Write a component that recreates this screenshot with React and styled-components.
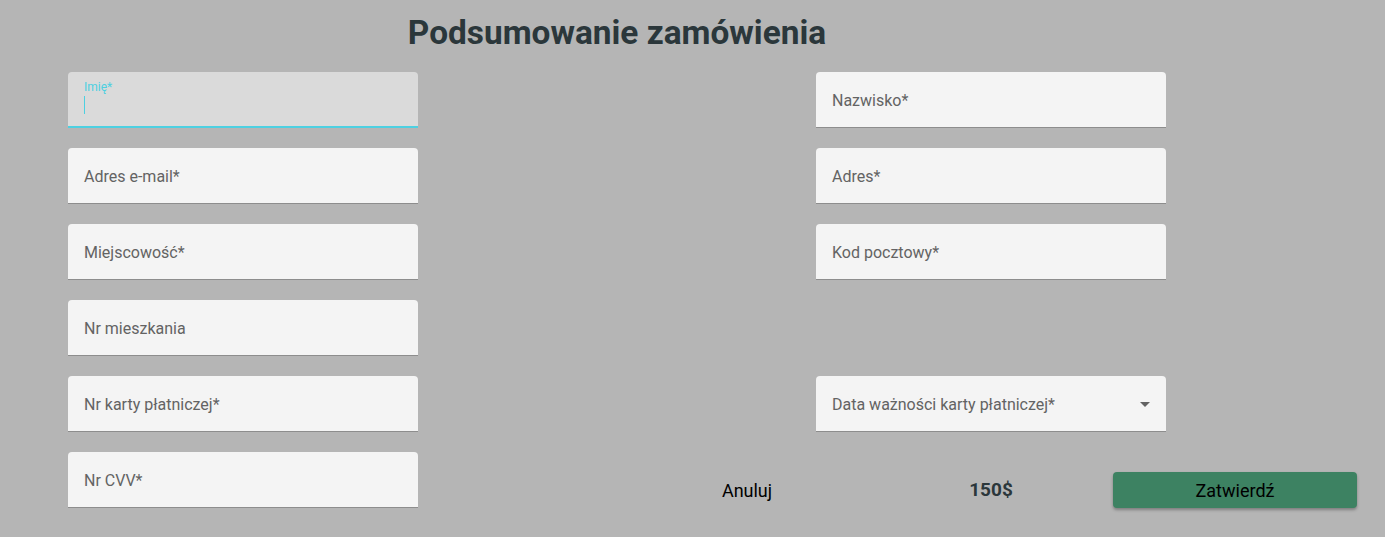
import React from "react";
import styled, { createGlobalStyle } from "styled-components";

const GlobalStyle = createGlobalStyle`
  body {
    margin: 0;
    background: #b5b5b5;
    font-family: Roboto, "Liberation Sans", sans-serif;
  }
`;

const Page = styled.div`
  min-height: 537px;
  padding-top: 12px;
  box-sizing: border-box;
`;

const Title = styled.h1`
  width: 1234px;
  margin: 0 0 19px;
  text-align: center;
  font-size: 33.4px;
  line-height: 41px;
  font-weight: 700;
  color: #2b373b;
`;

const Form = styled.div`
  display: flex;
  flex-direction: column;
  gap: 20px;
  padding-left: 68px;
`;

const Row = styled.div`
  display: flex;
  align-items: stretch;
  height: 56px;
`;

const Field = styled.div`
  position: relative;
  flex: 0 0 350px;
  height: 56px;
  box-sizing: border-box;
  margin-left: ${(p) => (p.$right ? "398px" : "0")};
  background: ${(p) => (p.$focused ? "#dadada" : "#f4f4f4")};
  border-radius: 4px 4px 0 0;
  border-bottom: ${(p) => (p.$focused ? "2px solid #4dd0e1" : "1px solid #8d8d8d")};
  display: flex;
  align-items: center;
  padding: 1px 16px 0;
`;

const Label = styled.span`
  font-size: 16px;
  color: #636363;
  white-space: nowrap;
`;

const SmallLabel = styled.span`
  position: absolute;
  left: 16px;
  top: 8px;
  font-size: 12px;
  color: #4dd0e1;
`;

const Caret = styled.span`
  position: absolute;
  left: 16px;
  top: 24px;
  width: 1px;
  height: 18px;
  background: #4dd0e1;
`;

const Arrow = styled.span`
  position: absolute;
  right: 16px;
  top: 26px;
  width: 0;
  height: 0;
  border-left: 5px solid transparent;
  border-right: 5px solid transparent;
  border-top: 5px solid #636363;
`;

const Actions = styled.div`
  flex: 0 0 auto;
  margin-left: 207px;
  display: grid;
  grid-template-columns: repeat(3, 244px);
  align-items: end;
`;

const TextButton = styled.button`
  height: 36px;
  background: none;
  border: none;
  font-family: inherit;
  font-size: 18px;
  color: #000;
  cursor: pointer;
`;

const Price = styled.div`
  height: 36px;
  line-height: 36px;
  text-align: center;
  font-size: 19px;
  font-weight: 700;
  color: #2b373b;
`;

const SubmitButton = styled.button`
  height: 36px;
  border: none;
  border-radius: 4px;
  background: #3d8262;
  color: #000;
  font-family: inherit;
  font-size: 18px;
  box-shadow: 0 2px 3px rgba(0, 0, 0, 0.3);
  cursor: pointer;
`;

const App = () => {
  return (
    <Page>
      <GlobalStyle />
      <Title>Podsumowanie zamówienia</Title>
      <Form>
        <Row>
          <Field $focused>
            <SmallLabel>Imię*</SmallLabel>
            <Caret />
          </Field>
          <Field $right>
            <Label>Nazwisko*</Label>
          </Field>
        </Row>
        <Row>
          <Field>
            <Label>Adres e-mail*</Label>
          </Field>
          <Field $right>
            <Label>Adres*</Label>
          </Field>
        </Row>
        <Row>
          <Field>
            <Label>Miejscowość*</Label>
          </Field>
          <Field $right>
            <Label>Kod pocztowy*</Label>
          </Field>
        </Row>
        <Row>
          <Field>
            <Label>Nr mieszkania</Label>
          </Field>
        </Row>
        <Row>
          <Field>
            <Label>Nr karty płatniczej*</Label>
          </Field>
          <Field $right>
            <Label>Data ważności karty płatniczej*</Label>
            <Arrow />
          </Field>
        </Row>
        <Row>
          <Field>
            <Label>Nr CVV*</Label>
          </Field>
          <Actions>
            <TextButton>Anuluj</TextButton>
            <Price>150$</Price>
            <SubmitButton>Zatwierdź</SubmitButton>
          </Actions>
        </Row>
      </Form>
    </Page>
  );
};

export default App;
